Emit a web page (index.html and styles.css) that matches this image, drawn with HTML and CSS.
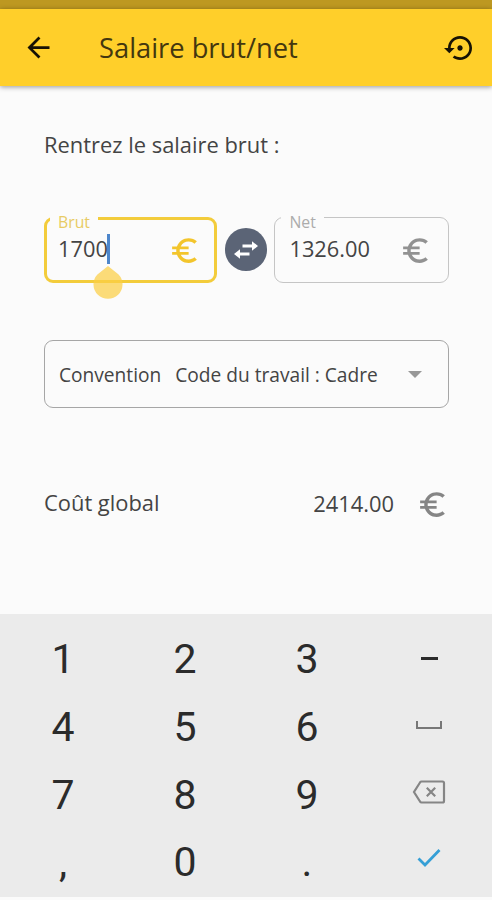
FILE: index.html
```html
<!DOCTYPE html>
<html lang="fr">
<head>
<meta charset="utf-8">
<title>Salaire brut/net</title>
<link rel="stylesheet" href="styles.css">
</head>
<body>
<svg class="defs" width="0" height="0">
  <symbol id="euro" viewBox="0 0 24 24"><path d="M15 18.5c-2.51 0-4.68-1.42-5.76-3.5H15v-2H8.58c-.05-.33-.08-.66-.08-1s.03-.67.08-1H15V9H9.24C10.32 6.92 12.5 5.5 15 5.5c1.61 0 3.09.59 4.23 1.57L21 5.3C19.41 3.87 17.3 3 15 3c-3.92 0-7.24 2.51-8.48 6H3v2h3.06c-.04.33-.06.66-.06 1s.02.67.06 1H3v2h3.52c1.24 3.49 4.56 6 8.48 6 2.31 0 4.41-.87 6-2.3l-1.78-1.77c-1.13.98-2.6 1.57-4.22 1.57z"/></symbol>
</svg>
<div class="status"></div>
<header class="bar">
  <svg class="icon" viewBox="0 0 24 24"><path d="M20 11H7.83l5.59-5.59L12 4l-8 8 8 8 1.41-1.41L7.83 13H20v-2z"/></svg>
  <h1 class="title">Salaire brut/net</h1>
  <svg class="icon icon-restore" viewBox="0 0 24 24"><path d="M14 12c0-1.1-.9-2-2-2s-2 .9-2 2 .9 2 2 2 2-.9 2-2zm-2-9c-4.97 0-9 4.03-9 9H0l4 4 4-4H5c0-3.87 3.13-7 7-7s7 3.13 7 7-3.13 7-7 7c-1.51 0-2.91-.49-4.06-1.3l-1.42 1.44C8.04 20.3 9.94 21 12 21c4.97 0 9-4.03 9-9s-4.03-9-9-9z"/></svg>
</header>
<main class="content">
  <p class="prompt">Rentrez le salaire brut :</p>
  <div class="fields">
    <div class="field field-active">
      <span class="label">Brut</span>
      <span class="value">1700</span><span class="caret"><svg class="handle" viewBox="0 0 30 34"><path d="M15 1L25.6 9.4A14.5 14.5 0 1 1 4.4 9.4z"/></svg></span>
      <svg class="euro"><use href="#euro"/></svg>
    </div>
    <div class="swap">
      <svg viewBox="0 0 26 20"><path d="M9.500 4.500h9.500V1.200l6 4.800-6 4.800V7.500H9.500zM16.500 12.500H7V9.200l-6 4.800 6 4.800V15.500h9.500z"/></svg>
    </div>
    <div class="field">
      <span class="label">Net</span>
      <span class="value">1326.00</span>
      <svg class="euro"><use href="#euro"/></svg>
    </div>
  </div>
  <div class="select">
    <span class="select-name">Convention</span>
    <span class="select-value">Code du travail : Cadre</span>
    <span class="arrow"></span>
  </div>
  <div class="total">
    <span class="total-name">Coût global</span>
    <span class="total-value">2414.00</span>
    <svg class="euro"><use href="#euro"/></svg>
  </div>
</main>
<div class="keypad">
  <span>1</span><span>2</span><span>3</span><span><i class="minus"></i></span>
  <span>4</span><span>5</span><span>6</span><span><i class="space"></i></span>
  <span>7</span><span>8</span><span>9</span>
  <span><svg class="back" viewBox="0 0 34 24"><path d="M9.500 1.500H30.500Q32 1.500 32 3V21Q32 22.500 30.500 22.500H9.500Q8.700 22.500 8 21.500L2 12 8 2.500Q8.700 1.500 9.500 1.500zM14.800 7.800l8.400 8.400M23.200 7.800l-8.400 8.400"/></svg></span>
  <span>,</span><span>0</span><span>.</span>
  <span><svg class="check" viewBox="0 0 24 20"><path d="M1.500 10.500L8 17 22.500 2"/></svg></span>
</div>
</body>
</html>
```
FILE: styles.css
```css
* { box-sizing: border-box; }
body {
  margin: 0;
  height: 900px;
  display: flex;
  flex-direction: column;
  overflow: hidden;
  background: #fbfbfb;
  color: #444;
  font-family: "Open Sans", "Noto Sans", sans-serif;
}
.defs { position: absolute; }
.status { height: 9px; background: #bd9821; }
.bar {
  height: 77px;
  padding: 0 16px 0 22px;
  display: flex;
  align-items: center;
  background: #ffcf2a;
  box-shadow: 0 1px 5px rgba(0, 0, 0, .4);
}
.icon { width: 33px; height: 33px; fill: #171204; }
.icon-restore { width: 32px; height: 32px; }
.title {
  flex: 1;
  margin: 0 0 0 44px;
  font-size: 27.300px;
  font-weight: 400;
  color: #44370f;
}
.content {
  height: 528px;
  padding: 39px 43px 0 44px;
}
.prompt { margin: 0; height: 40px; line-height: 40px; font-size: 21.900px; }
.fields { margin-top: 52px; height: 66px; display: flex; align-items: center; }
.field {
  position: relative;
  width: 175px;
  height: 66px;
  border: 1px solid #c5c5c5;
  border-radius: 9px;
  padding: 0 16px 0 14px;
  display: flex;
  align-items: center;
  fill: #929292;
}
.field-active {
  width: 173px;
  border: 3px solid #f3cc3b;
  padding: 0 13px 0 11px;
  fill: #f3c52c;
}
.label {
  position: absolute;
  left: 6px;
  top: -5px;
  padding: 0 8px;
  line-height: 18px;
  font-size: 15.800px;
  color: #acacac;
  background: #fbfbfb;
}
.field-active .label { left: 3px; top: -7px; color: #e8cb64; }
.value { font-size: 21.800px; line-height: 30px; padding-bottom: 2px; }
.caret { position: relative; width: 3px; height: 30px; margin: 0 0 3px -1px; background: #4d86cb; }
.handle {
  position: absolute;
  left: -14px;
  top: 31px;
  width: 30px;
  height: 34px;
  fill: #fccf46;
  opacity: .72;
}
.euro { width: 33px; height: 33px; margin-left: auto; }
.swap {
  width: 43px;
  height: 43px;
  margin: 0 7px 1px 8px;
  border-radius: 50%;
  background: #5b6476;
  display: flex;
  align-items: center;
  justify-content: center;
}
.swap svg { width: 26px; height: 20px; fill: #fff; }
.select {
  margin-top: 57px;
  width: 405px;
  height: 68px;
  border: 1px solid #a6a6a6;
  border-radius: 9px;
  padding: 0 26px 0 14px;
  display: flex;
  align-items: center;
  font-size: 19.150px;
}
.select-name, .select-value { padding-top: 2px; }
.select-value { margin-left: 14px; }
.arrow {
  margin-left: auto;
  border: 7px solid transparent;
  border-top-color: #989898;
  border-bottom: 0;
}
.total {
  height: 40px;
  margin-top: 76px;
  display: flex;
  align-items: center;
  font-size: 21.900px;
  fill: #858585;
}
.total-name { padding-bottom: 4px; }
.total-value { margin-left: auto; padding-bottom: 2px; }
.total .euro { margin-left: 22px; }
.keypad {
  height: 283px;
  padding: 11px 2px 1px;
  display: grid;
  grid-template-columns: repeat(4, 122px);
  grid-template-rows: repeat(4, 67.800px);
  background: #ebebeb;
  font: 400 41px/68px Roboto, sans-serif;
  color: #2b2b2b;
}
.keypad span { display: flex; align-items: center; justify-content: center; }
.minus { width: 17px; height: 3px; background: #2b2b2b; }
.space { width: 26px; height: 8px; margin-bottom: 4px; border: 2px solid #777; border-top: 0; }
.back { width: 34px; height: 24px; margin-bottom: 4px; fill: none; stroke: #858585; stroke-width: 2.200; }
.check { width: 24px; height: 20px; margin-bottom: 9px; fill: none; stroke: #359fd6; stroke-width: 2.800; }
```
